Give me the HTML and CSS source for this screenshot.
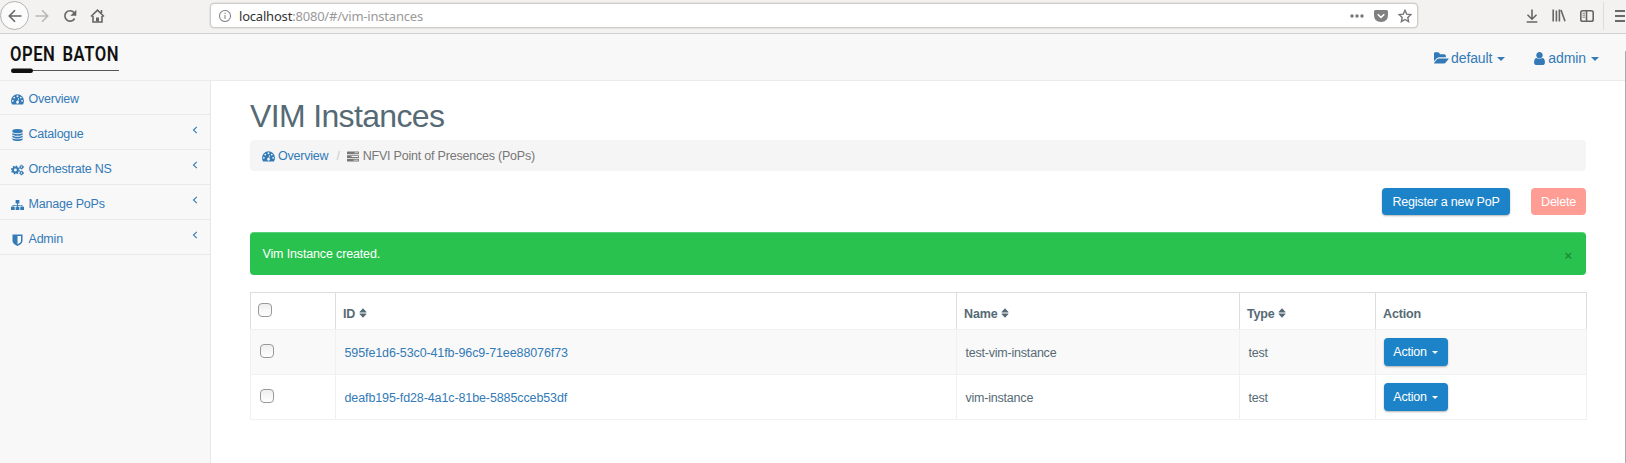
FILE: index.html
```html
<!DOCTYPE html>
<html lang="en">
<head>
<meta charset="utf-8">
<title>Open Baton</title>
<link rel="stylesheet" href="styles.css">
</head>
<body>
<svg class="defs" width="0" height="0">
  <symbol id="dash" viewBox="0 0 14 12"><path fill-rule="evenodd" d="M7 1a7 7 0 0 0-7 7c0 1.300.3 2.600 1 3.600.2.300.4.400.7.400h10.600c.3 0 .5-.1.700-.400.7-1 1-2.300 1-3.600a7 7 0 0 0-7-7zM2 7a1 1 0 1 1 0 2 1 1 0 0 1 0-2zM3.500 3.500a1 1 0 1 1 0 2 1 1 0 0 1 0-2zM7 2a1 1 0 1 1 0 2 1 1 0 0 1 0-2zM10.500 3.500a1 1 0 1 1 0 2 1 1 0 0 1 0-2zM12 7a1 1 0 1 1 0 2 1 1 0 0 1 0-2zM7.900 4.900l.7.200-.8 3.100a1.500 1.500 0 1 1-.8-.200z"/></symbol>
  <symbol id="db" viewBox="128 0 1536 1792"><path d="M896 768q237 0 443-43t325-127v170q0 69-103 128t-280 93.500-385 34.500-385-34.500-280-93.500-103-128v-170q119 84 325 127t443 43zm0 768q237 0 443-43t325-127v170q0 69-103 128t-280 93.500-385 34.500-385-34.500-280-93.500-103-128v-170q119 84 325 127t443 43zm0-384q237 0 443-43t325-127v170q0 69-103 128t-280 93.500-385 34.500-385-34.500-280-93.500-103-128v-170q119 84 325 127t443 43zm0-1152q208 0 385 34.500t280 93.500 103 128v128q0 69-103 128t-280 93.500-385 34.500-385-34.500-280-93.500-103-128v-128q0-69 103-128t280-93.500 385-34.500z"/></symbol>
  <symbol id="cogs" viewBox="0 0 14 12"><g fill="none" stroke="currentColor"><circle cx="4.700" cy="6" r="2.700" stroke-width="2.200"/><circle cx="4.700" cy="6" r="4.100" stroke-width="1.400" stroke-dasharray="1.610"/><circle cx="11.300" cy="2.800" r="1.400" stroke-width="1.200"/><circle cx="11.300" cy="2.800" r="2.200" stroke-width=".8" stroke-dasharray="1.150"/><circle cx="11.300" cy="9.200" r="1.400" stroke-width="1.200"/><circle cx="11.300" cy="9.200" r="2.200" stroke-width=".8" stroke-dasharray="1.150"/></g></symbol>
  <symbol id="map" viewBox="0 0 14 12"><path d="M5 .5h4v4H7.500V6h4.800v2H14v3.500h-4V8h1.500V6.800h-4V8H9v3.500H5V8h1.500V6.800h-4V8H4v3.500H0V8h1.700V6h4.800V4.500H5z"/></symbol>
  <symbol id="shield" viewBox="0 0 10 12"><path fill-rule="evenodd" d="M0 .5h10V7c0 2.300-2.500 4-5 5-2.500-1-5-2.700-5-5zM5 2v8.300C7 9.300 8.500 8.300 8.500 7V2z"/></symbol>
  <symbol id="folder" viewBox="0 128 1856 1440"><path d="M1815 952q0 31-31 66l-336 396q-43 51-120.500 86.500t-143.500 35.500h-1088q-34 0-60.500-13t-26.500-43q0-31 31-66l336-396q43-51 120.500-86.500t143.500-35.500h1088q34 0 60.500 13t26.500 43zm-343-344v160h-832q-94 0-197 47.500t-164 119.500l-337 396-5 6q0-4-.5-12.500t-.5-12.500v-960q0-92 66-158t158-66h320q92 0 158 66t66 158v32h544q92 0 158 66t66 158z"/></symbol>
  <symbol id="user" viewBox="256 128 1280 1536"><path d="M1536 1399q0 109-62.500 187t-150.500 78h-854q-88 0-150.500-78t-62.500-187q0-85 8.500-160.500t31.500-152 58.500-131 94-89 134.500-34.500q131 128 313 128t313-128q76 0 134.500 34.500t94 89 58.500 131 31.500 152 8.500 160.500zm-256-887q0 159-112.500 271.500t-271.500 112.500-271.500-112.500-112.500-271.500 112.500-271.500 271.500-112.500 271.500 112.500 112.500 271.500z"/></symbol>
  <symbol id="tasks" viewBox="0 0 12 11"><path fill-rule="evenodd" d="M.5.500h11q.5 0 .5.500v1.700q0 .5-.5.500H.5q-.5 0-.5-.5V1q0-.5.500-.5zM7.500 1.400v.8h3.700v-.8zM.5 4.200h11q.5 0 .5.500v1.700q0 .5-.5.500H.5q-.5 0-.5-.5V4.700q0-.5.500-.5zM4.500 5.100v.8h6.700v-.8zM.5 7.800h11q.5 0 .5.500V10q0 .5-.5.500H.5Q0 10.500 0 10V8.300q0-.5.500-.5zM6.500 8.700v.8h4.700v-.8z"/></symbol>
  <symbol id="sort" viewBox="0 0 8 10"><path d="M4 .2 7.500 4q.2.400-.3.400H.8Q.3 4.400.5 4zM.8 5.600h6.400q.5 0 .3.400L4 9.800.5 6q-.2-.4.300-.4z"/></symbol>
  <symbol id="left" viewBox="0 0 6 8"><path fill="none" stroke="currentColor" stroke-width="1.100" d="M4.800.8 1.500 4l3.300 3.200"/></symbol>
</svg>

<div class="browser">
  <span class="back"><svg width="14" height="14" viewBox="0 0 14 14"><path d="M13.500 7H1.500M7 1.300 1.300 7 7 12.700"/></svg></span>
  <svg class="fwd" width="14" height="14" viewBox="0 0 14 14"><path d="M.5 7h12M7 1.300 12.700 7 7 12.700"/></svg>
  <svg class="reload" width="14" height="14" viewBox="0 0 14 14"><path d="M11.600 9.500A5.200 5.200 0 1 1 11 3.500"/><path class="solid" d="M13.300.7v6H7.300z"/></svg>
  <svg class="home" width="15" height="14" viewBox="0 0 15 14"><path d="M1 7.500 7.500 1.200 14 7.500M3 7v6h9V7M11.500 1v3"/><path class="solid" d="M6 12.500v-4h3v4z"/></svg>
  <div class="url">
    <svg class="info" width="12" height="12" viewBox="0 0 12 12"><circle cx="6" cy="6" r="5.500"/><path d="M6 5v4M6 2.700v1.300"/></svg>
    <span class="address"><b>localhost</b>:8080/#/vim-instances</span>
    <svg class="dots" width="14" height="4" viewBox="0 0 14 4"><circle cx="2" cy="2" r="1.700"/><circle cx="7" cy="2" r="1.700"/><circle cx="12" cy="2" r="1.700"/></svg>
    <svg class="pocket" width="14" height="12" viewBox="0 0 14 12"><path class="shape" d="M1.500 0h11Q14 0 14 1.500V5q0 7-7 7T0 5V1.500Q0 0 1.500 0z"/><path class="tick" d="M3.700 4.200 7 7.400l3.300-3.200"/></svg>
    <svg class="star" width="14" height="14" viewBox="0 0 14 14"><path d="m7 1.300 1.700 3.800 4.200.5-3.100 2.800.8 4.200L7 10.500l-3.600 2.100.8-4.200L1.100 5.600l4.200-.5z"/></svg>
  </div>
  <svg class="download" width="12" height="14" viewBox="0 0 12 14"><path d="M6 .5v9.500M1.500 5.800 6 10.200l4.500-4.400M.7 13h10.600"/></svg>
  <svg class="library" width="14" height="13" viewBox="0 0 14 13"><path d="M1.200.5v12M4.400 1.500v11M7.400.5v12M9 1l4 11.300"/></svg>
  <svg class="panel" width="14" height="12" viewBox="0 0 14 12"><rect x=".8" y=".8" width="12.400" height="10.400" rx="1.800"/><path d="M6.500 1v10"/><path class="thin" d="M2.500 3.200h2.500M2.500 5.200h2.500M2.500 7.200h2.500"/></svg>
  <span class="menu"><i></i><i></i><i></i></span>
</div>

<div class="app">
  <header class="top">
    <div class="logo"><svg width="112" height="32" viewBox="0 0 112 32"><text x="0" y="20" textLength="109" lengthAdjust="spacingAndGlyphs">OPEN BATON</text><path class="line" d="M8 29.500h101"/><rect x="1" y="27.500" width="22" height="4.500" rx="2.200"/></svg></div>
    <a class="project"><svg width="15" height="12"><use href="#folder"/></svg>default<i class="caret"></i></a>
    <a class="account"><svg width="11" height="13"><use href="#user"/></svg>admin<i class="caret"></i></a>
  </header>
  <div class="columns">
    <nav class="side">
      <a><svg width="13" height="12"><use href="#dash"/></svg><span>Overview</span></a>
      <a><svg width="13" height="12"><use href="#db"/></svg><span>Catalogue</span><svg class="chev" width="6" height="8"><use href="#left"/></svg></a>
      <a><svg width="13" height="12"><use href="#cogs"/></svg><span>Orchestrate NS</span><svg class="chev" width="6" height="8"><use href="#left"/></svg></a>
      <a><svg width="13" height="12"><use href="#map"/></svg><span>Manage PoPs</span><svg class="chev" width="6" height="8"><use href="#left"/></svg></a>
      <a><svg width="13" height="12"><use href="#shield"/></svg><span>Admin</span><svg class="chev" width="6" height="8"><use href="#left"/></svg></a>
    </nav>
    <main>
      <h1>VIM Instances</h1>
      <div class="crumbs"><a><svg width="13" height="12"><use href="#dash"/></svg>Overview</a><span class="sep">/</span><svg width="12" height="11"><use href="#tasks"/></svg><span>NFVI Point of Presences (PoPs)</span></div>
      <div class="actions"><button class="btn register">Register a new PoP</button><button class="btn delete">Delete</button></div>
      <div class="alert"><span>Vim Instance created.</span><span class="close">×</span></div>
      <table>
        <colgroup><col class="c1"><col class="c2"><col class="c3"><col class="c4"><col class="c5"></colgroup>
        <thead><tr><th><i class="check"></i></th><th>ID <svg width="8" height="10"><use href="#sort"/></svg></th><th>Name <svg width="8" height="10"><use href="#sort"/></svg></th><th>Type <svg width="8" height="10"><use href="#sort"/></svg></th><th>Action</th></tr></thead>
        <tbody>
          <tr><td><i class="check"></i></td><td class="id"><a>595fe1d6-53c0-41fb-96c9-71ee88076f73</a></td><td>test-vim-instance</td><td>test</td><td><button class="btn act">Action<i class="caret"></i></button></td></tr>
          <tr><td><i class="check"></i></td><td class="id"><a>deafb195-fd28-4a1c-81be-5885cceb53df</a></td><td>vim-instance</td><td>test</td><td><button class="btn act">Action<i class="caret"></i></button></td></tr>
        </tbody>
      </table>
    </main>
    <div class="scroll"></div>
  </div>
</div>
</body>
</html>
```
FILE: styles.css
```css
* { box-sizing: border-box; }
body { margin: 0; width: 1626px; height: 463px; overflow: hidden; display: flex; flex-direction: column; background: #fff; color: #566a75; font: 12.5px/18px "Liberation Sans", Arial, sans-serif; letter-spacing: -.21px; }
svg { display: block; flex: none; fill: currentColor; }
.defs { position: absolute; }
a { color: #337ab7; }

.browser { height: 34px; flex: none; display: flex; align-items: center; padding-bottom: 2px; background: #f3f2f0; border-bottom: 1px solid #d2d1cf; color: #666664; }
.browser svg { fill: none; stroke: currentColor; stroke-width: 1.6; }
.browser .solid { fill: currentColor; stroke: none; }
.back { width: 29px; height: 29px; border: 1px solid #b3b2b0; border-radius: 50%; background: #fbfbfb; display: grid; place-items: center; flex: none; }
.browser .fwd { margin-left: 6px; color: #b9b8b6; }
.reload { margin-left: 14px; }
.home { margin-left: 13px; }
.url { width: 1208px; height: 25px; margin-left: 105px; display: flex; align-items: center; background: #fff; border: 1px solid #cfcdca; border-radius: 4px; padding: 0 5px 0 8px; box-shadow: 0 0 0 .5px #d8d6d3; }
.browser .info { stroke-width: 1.1; color: #8b8b8b; }
.address { margin-left: 8px; flex: 1; font: 13px/18px "Noto Sans", sans-serif; color: #999; letter-spacing: -.2px; }
.address b { font-weight: 400; color: #333; }
.browser .dots { fill: #777; stroke: none; }
.pocket { margin-left: 10px; }
.pocket .shape { fill: #808080; stroke: none; }
.pocket .tick { stroke: #fff; }
.browser .star { margin-left: 10px; stroke-width: 1.4; color: #777; }
.download { margin-left: 108px; }
.library { margin-left: 14px; }
.panel { margin-left: 14px; }
.browser .thin { stroke-width: .8; }
.menu { margin-left: 9px; border-left: 1px solid #dddcda; height: 28px; width: 22px; padding: 8px 0 0 11px; display: flex; flex-direction: column; gap: 3px; }
.menu i { height: 2px; background: #6a6a68; }

.app { flex: 1; display: flex; flex-direction: column; }
.top { height: 47px; flex: none; display: flex; align-items: center; background: #f8f8f8; border-bottom: 1px solid #ebebeb; font-size: 14px; letter-spacing: -.1px; padding-right: 27px; }
.logo { margin: 0 auto 0 10px; color: #111; }
.logo svg { overflow: visible; }
.logo text { font: 600 19.5px/1 Roboto, sans-serif; letter-spacing: .6px; word-spacing: 3px; }
.logo .line { stroke: #555; stroke-width: 1.2; }
.top a { display: flex; align-items: center; padding-top: 2px; }
.project { margin-right: 29px; }
.project svg { margin-right: 2px; }
.account svg { margin-right: 3px; }
.caret { display: inline-block; border: 3.5px solid transparent; border-top: 3.5px solid currentColor; border-bottom: 0; margin: 2px 0 0 5px; }
.top .caret { border-width: 4px 4px 0; }

.columns { flex: 1; display: flex; }
.side { width: 211px; background: #f8f8f8; border-right: 1px solid #e7e7e7; }
.side a { height: 35px; display: flex; align-items: center; padding: 5px 12px 0 11px; border-bottom: 1px solid #e9e9e9; }
.side a:first-child { height: 34px; padding-top: 3px; }
.side a span { margin: -1px auto 0 4.5px; }
.chev { margin-top: -9px; }

main { width: 1336px; margin-left: 39px; }
h1 { margin: 17px 0 0; height: 42px; font-size: 32px; line-height: 36px; font-weight: 400; letter-spacing: -.65px; }
.crumbs { height: 31px; background: #f5f5f5; border-radius: 4px; display: flex; align-items: center; padding: 1px 12px 0; color: #777; }
.crumbs a { display: flex; align-items: center; gap: 3px; }
.crumbs .sep { margin: 0 7px 0 8px; color: #ccc; }
.crumbs > svg { margin-right: 4px; }
.actions { margin-top: 17px; display: flex; justify-content: flex-end; gap: 21px; }
.btn { height: 27px; border: 0; border-radius: 4px; background: #1d83c8; color: #fff; font: inherit; letter-spacing: inherit; padding: 0; box-shadow: 0 1px 2px rgba(0,0,0,.3); display: flex; align-items: center; justify-content: center; }
.register { width: 128px; letter-spacing: -.18px; }
.delete { width: 55px; background: #ff9c93; box-shadow: none; }
.alert { margin-top: 17px; height: 43px; background: #29c24e; border-radius: 4px; border-top: 1px solid #5bd078; color: #fff; display: flex; align-items: center; justify-content: space-between; padding: 0 14px 0 12.5px; letter-spacing: -.15px; }
.close { font-size: 13px; font-weight: 700; color: #1c9039; padding-top: 4px; }

table { margin-top: 17px; width: 1336px; table-layout: fixed; border-collapse: collapse; }
.c1 { width: 85px; } .c2 { width: 621px; } .c3 { width: 283px; } .c4 { width: 136px; } .c5 { width: 211px; }
th, td { border: 1px solid #f1f1f1; padding: 2px 0 0 8.5px; text-align: left; }
th { height: 37px; border-color: #ddd; border-bottom-color: #f1f1f1; padding: 5px 0 0 7px; letter-spacing: -.15px; }
td { height: 45px; }
.id { letter-spacing: -.11px; }
th svg { display: inline-block; }
tbody tr:first-child { background: #f9f9f9; }
.check { display: block; width: 14px; height: 14px; border: 1px solid #999; border-radius: 4px; background: linear-gradient(#eee, #fff); }
td .check { margin-top: -5px; }
th .check { margin-top: -7px; }
td .btn { width: 64px; height: 28px; margin: -3px 0 0 -1px; }
.scroll { width: 1px; margin: -30px 0 0 auto; background: #aaa; }
```
